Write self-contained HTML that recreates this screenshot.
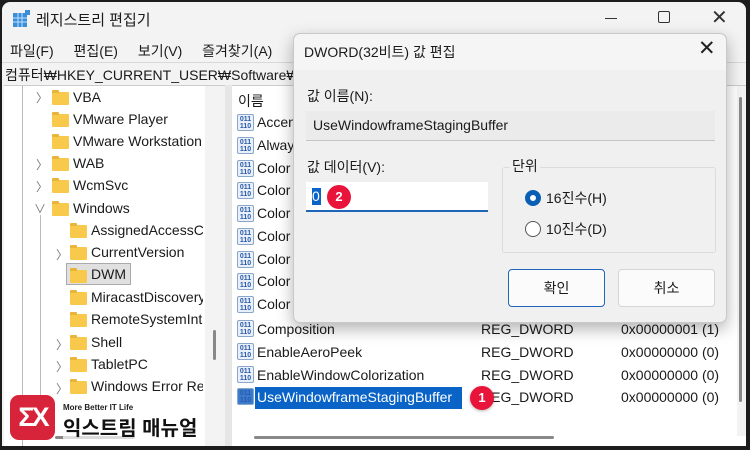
<!DOCTYPE html>
<html><head><meta charset="utf-8"><style>
*{margin:0;padding:0;box-sizing:border-box}
body{width:750px;height:450px;overflow:hidden;background:#1c1c1c;font-family:"Liberation Sans","Noto Sans CJK KR",sans-serif;font-size:14px;color:#1a1a1a;position:relative}
.a{position:absolute;white-space:nowrap}
#win{position:absolute;left:2px;top:2px;width:744px;height:444px;background:#f3f3f3;border-radius:8px 8px 0 0;overflow:hidden}
.fold{position:absolute;width:17px;height:13px;background:#f8c94a;border-radius:1px}
.fold:before{content:"";position:absolute;left:0;top:-2px;width:7px;height:3px;background:#e8b53a;border-radius:1px 1px 0 0}
.chev{position:absolute;color:#777;font-size:12px}
.ic{position:absolute;width:17px;height:17px;border:1px solid #8aa6c8;background:#e9f0f9;border-radius:2px;font-size:7px;line-height:7px;color:#2a5aa8;font-weight:bold;text-align:center;padding-top:1px}
</style></head><body>
<div id="win">
 <!-- title -->
 <svg class="a" style="left:10px;top:7px" width="20" height="20"><rect x="1" y="4" width="14" height="14" fill="#3a8fd8"/><g stroke="#bfe0fa" stroke-width="1"><line x1="1" y1="9" x2="15" y2="9"/><line x1="1" y1="13" x2="15" y2="13"/><line x1="6" y1="4" x2="6" y2="18"/><line x1="10" y1="4" x2="10" y2="18"/></g><rect x="13" y="1" width="5" height="5" fill="#3a8fd8"/></svg>
 <div class="a" style="left:34px;top:7px;font-size:15px">레지스트리 편집기</div>
 <div class="a" style="left:603px;top:16px;width:12px;height:1px;background:#333"></div>
 <div class="a" style="left:656px;top:9px;width:12px;height:12px;border:1.3px solid #333;border-radius:2px"></div>
 <div class="a" style="left:709px;top:3px;font-size:20px;color:#333">✕</div>
 <!-- menu -->
 <div class="a" style="left:8px;top:39px;font-size:14px;word-spacing:16px">파일(F) 편집(E) 보기(V) 즐겨찾기(A)</div>
 <div class="a" style="left:0;top:60px;width:744px;height:1px;background:#d8d8d8"></div>
 <div class="a" style="left:3px;top:63px;font-size:14px">컴퓨터₩HKEY_CURRENT_USER₩Software₩M</div>
 <!-- tree -->
 <div class="a" style="left:2px;top:83px;width:221px;height:361px;background:#fff;border-top:1px solid #ccc"></div>
 <div class="a" style="left:203px;top:84px;width:20px;height:360px;background:#f3f3f3"></div>
 <div class="a" style="left:211px;top:328px;width:3px;height:30px;background:#888;border-radius:2px"></div>
 <div class="a" style="left:20px;top:84px;width:1px;height:360px;background:#bbb"></div>
 <div class="a" style="left:223px;top:83px;width:7px;height:361px;background:#e6e6e6"></div>
 <!-- list -->
 <div class="a" style="left:230px;top:83px;width:514px;height:361px;background:#fff;border-top:1px solid #ccc"></div>
 <div class="a" style="left:735px;top:84px;width:9px;height:350px;background:#f3f3f3"></div>
 <div class="a" style="left:737px;top:95px;width:3px;height:305px;background:#888;border-radius:2px"></div>
 <div class="a" style="left:252px;top:434px;width:300px;height:3px;background:#888;border-radius:2px"></div>
 <div class="a" style="left:53px;top:434px;width:80px;height:3px;background:#888;border-radius:2px"></div>
 <div class="a" style="left:236px;top:89px;font-size:14px">이름</div>
</div>
<div id="tree" style="font-size:14px">
 <span class="chev a" style="left:36px;top:89px">〉</span><div class="fold" style="left:52px;top:92px"></div><div class="a" style="left:73px;top:89px">VBA</div>
 <div class="fold" style="left:52px;top:114px"></div><div class="a" style="left:73px;top:111px">VMware Player</div>
 <div class="fold" style="left:52px;top:136px"></div><div class="a" style="left:73px;top:133px">VMware Workstation</div>
 <span class="chev a" style="left:36px;top:156px">〉</span><div class="fold" style="left:52px;top:158px"></div><div class="a" style="left:73px;top:155px">WAB</div>
 <span class="chev a" style="left:36px;top:178px">〉</span><div class="fold" style="left:52px;top:180px"></div><div class="a" style="left:73px;top:177px">WcmSvc</div>
 <span class="chev a" style="left:34px;top:200px">∨</span><div class="fold" style="left:52px;top:203px"></div><div class="a" style="left:73px;top:200px">Windows</div>
 <div class="a" style="left:40px;top:215px;width:1px;height:200px;background:#bbb"></div>
 <div class="fold" style="left:70px;top:225px"></div><div class="a" style="left:91px;top:222px;width:112px;overflow:hidden">AssignedAccessCo</div>
 <span class="chev a" style="left:56px;top:246px">〉</span><div class="fold" style="left:70px;top:247px"></div><div class="a" style="left:91px;top:244px">CurrentVersion</div>
 <div class="a" style="left:66px;top:263px;width:65px;height:22px;background:#e0e0e0;border:1px solid #aaa"></div><div class="fold" style="left:70px;top:270px"></div><div class="a" style="left:91px;top:266px">DWM</div>
 <div class="fold" style="left:70px;top:292px"></div><div class="a" style="left:91px;top:289px;width:112px;overflow:hidden">MiracastDiscovery</div>
 <div class="fold" style="left:70px;top:314px"></div><div class="a" style="left:91px;top:311px;width:112px;overflow:hidden">RemoteSystemInt</div>
 <span class="chev a" style="left:56px;top:336px">〉</span><div class="fold" style="left:70px;top:337px"></div><div class="a" style="left:91px;top:334px">Shell</div>
 <span class="chev a" style="left:56px;top:358px">〉</span><div class="fold" style="left:70px;top:359px"></div><div class="a" style="left:91px;top:356px">TabletPC</div>
 <span class="chev a" style="left:56px;top:380px">〉</span><div class="fold" style="left:70px;top:381px"></div><div class="a" style="left:91px;top:378px;width:112px;overflow:hidden">Windows Error Re</div>
</div>
<div id="list" style="font-size:14px">
 <div class="ic" style="left:237px;top:114px">011<br>110</div><div class="a" style="left:257px;top:114px">Accent</div>
 <div class="ic" style="left:237px;top:137px">011<br>110</div><div class="a" style="left:257px;top:137px">Always</div>
 <div class="ic" style="left:237px;top:160px">011<br>110</div><div class="a" style="left:257px;top:160px">Color</div>
 <div class="ic" style="left:237px;top:182px">011<br>110</div><div class="a" style="left:257px;top:182px">Color</div>
 <div class="ic" style="left:237px;top:205px">011<br>110</div><div class="a" style="left:257px;top:205px">Color</div>
 <div class="ic" style="left:237px;top:228px">011<br>110</div><div class="a" style="left:257px;top:228px">Color</div>
 <div class="ic" style="left:237px;top:251px">011<br>110</div><div class="a" style="left:257px;top:251px">Color</div>
 <div class="ic" style="left:237px;top:273px">011<br>110</div><div class="a" style="left:257px;top:273px">Color</div>
 <div class="ic" style="left:237px;top:296px">011<br>110</div><div class="a" style="left:257px;top:296px">Color</div>
 <div class="ic" style="left:237px;top:320px">011<br>110</div><div class="a" style="left:257px;top:321px">Composition</div><div class="a" style="left:481px;top:321px">REG_DWORD</div><div class="a" style="left:621px;top:321px">0x00000001 (1)</div>
 <div class="ic" style="left:237px;top:343px">011<br>110</div><div class="a" style="left:257px;top:344px">EnableAeroPeek</div><div class="a" style="left:481px;top:344px">REG_DWORD</div><div class="a" style="left:621px;top:344px">0x00000000 (0)</div>
 <div class="ic" style="left:237px;top:366px">011<br>110</div><div class="a" style="left:257px;top:367px">EnableWindowColorization</div><div class="a" style="left:481px;top:367px">REG_DWORD</div><div class="a" style="left:621px;top:367px">0x00000000 (0)</div>
 <div class="ic" style="left:237px;top:388px;background:#3a7bd0">011<br>110</div><div class="a" style="left:255px;top:387px;width:207px;height:22px;background:#0a64c8"></div><div class="a" style="left:257px;top:389px;color:#fff">UseWindowframeStagingBuffer</div><div class="a" style="left:481px;top:389px">REG_DWORD</div><div class="a" style="left:621px;top:389px">0x00000000 (0)</div>
 <div class="a" style="left:470px;top:386px;width:24px;height:24px;border-radius:50%;background:#e8143a;color:#fff;font-size:13px;font-weight:bold;text-align:center;line-height:24px;box-shadow:0 1px 3px rgba(0,0,0,.3)">1</div>
</div>
<!-- dialog -->
<div class="a" style="left:293px;top:33px;width:434px;height:290px;background:#f0f0f0;border:1px solid #c8c8c8;border-radius:7px;box-shadow:0 6px 16px rgba(0,0,0,.3)">
 <div class="a" style="left:0;top:0;width:432px;height:36px;background:#f5f5f5;border-radius:7px 7px 0 0"></div>
 <div class="a" style="left:10px;top:8px;font-size:14px">DWORD(32비트) 값 편집</div>
 <div class="a" style="left:404px;top:2px;font-size:21px;color:#222">✕</div>
 <div class="a" style="left:13px;top:52px">값 이름(N):</div>
 <div class="a" style="left:12px;top:77px;width:409px;height:30px;background:#ebebeb;border-bottom:1px solid #c5c5c5;padding:6px 7px">UseWindowframeStagingBuffer</div>
 <div class="a" style="left:13px;top:123px">값 데이터(V):</div>
 <div class="a" style="left:12px;top:148px;width:182px;height:30px;background:#fff;border-bottom:2px solid #1f65b8"></div>
 <div class="a" style="left:18px;top:154px;width:9px;height:17px;background:#0a64c8;color:#fff;line-height:17px">0</div>
 <div class="a" style="left:33px;top:151px;width:24px;height:24px;border-radius:50%;background:#e8143a;color:#fff;font-size:13px;font-weight:bold;text-align:center;line-height:24px">2</div>
 <div class="a" style="left:208px;top:133px;width:214px;height:86px;border:1px solid #dcdcdc;border-radius:3px"></div>
 <div class="a" style="left:216px;top:122px;background:#f0f0f0;padding:0 2px">단위</div>
 <div class="a" style="left:231px;top:156px;width:16px;height:16px;border-radius:50%;border:5px solid #0a5fb4;background:#fff"></div>
 <div class="a" style="left:252px;top:154px">16진수(H)</div>
 <div class="a" style="left:231px;top:187px;width:16px;height:16px;border-radius:50%;border:1px solid #555;background:#fff"></div>
 <div class="a" style="left:252px;top:185px">10진수(D)</div>
 <div class="a" style="left:214px;top:235px;width:97px;height:38px;background:#fbfbfb;border:1px solid #1f65b8;border-radius:4px;text-align:center;line-height:36px">확인</div>
 <div class="a" style="left:324px;top:235px;width:97px;height:38px;background:#fbfbfb;border:1px solid #d5d5d5;border-radius:4px;text-align:center;line-height:36px">취소</div>
</div>
<!-- logo -->
<div class="a" style="left:10px;top:395px;width:45px;height:45px;background:#d8243a;border-radius:9px;color:#fff;font-size:27px;font-weight:bold;text-align:center;line-height:44px;letter-spacing:-3px">ΣX</div>
<div class="a" style="left:63px;top:403px;font-size:8px;font-weight:bold;color:#222;background:#fff">More Better IT Life</div>
<div class="a" style="left:63px;top:412px;font-size:20px;font-weight:bold;color:#111;background:rgba(255,255,255,.7)">익스트림 매뉴얼</div>
</body></html>
